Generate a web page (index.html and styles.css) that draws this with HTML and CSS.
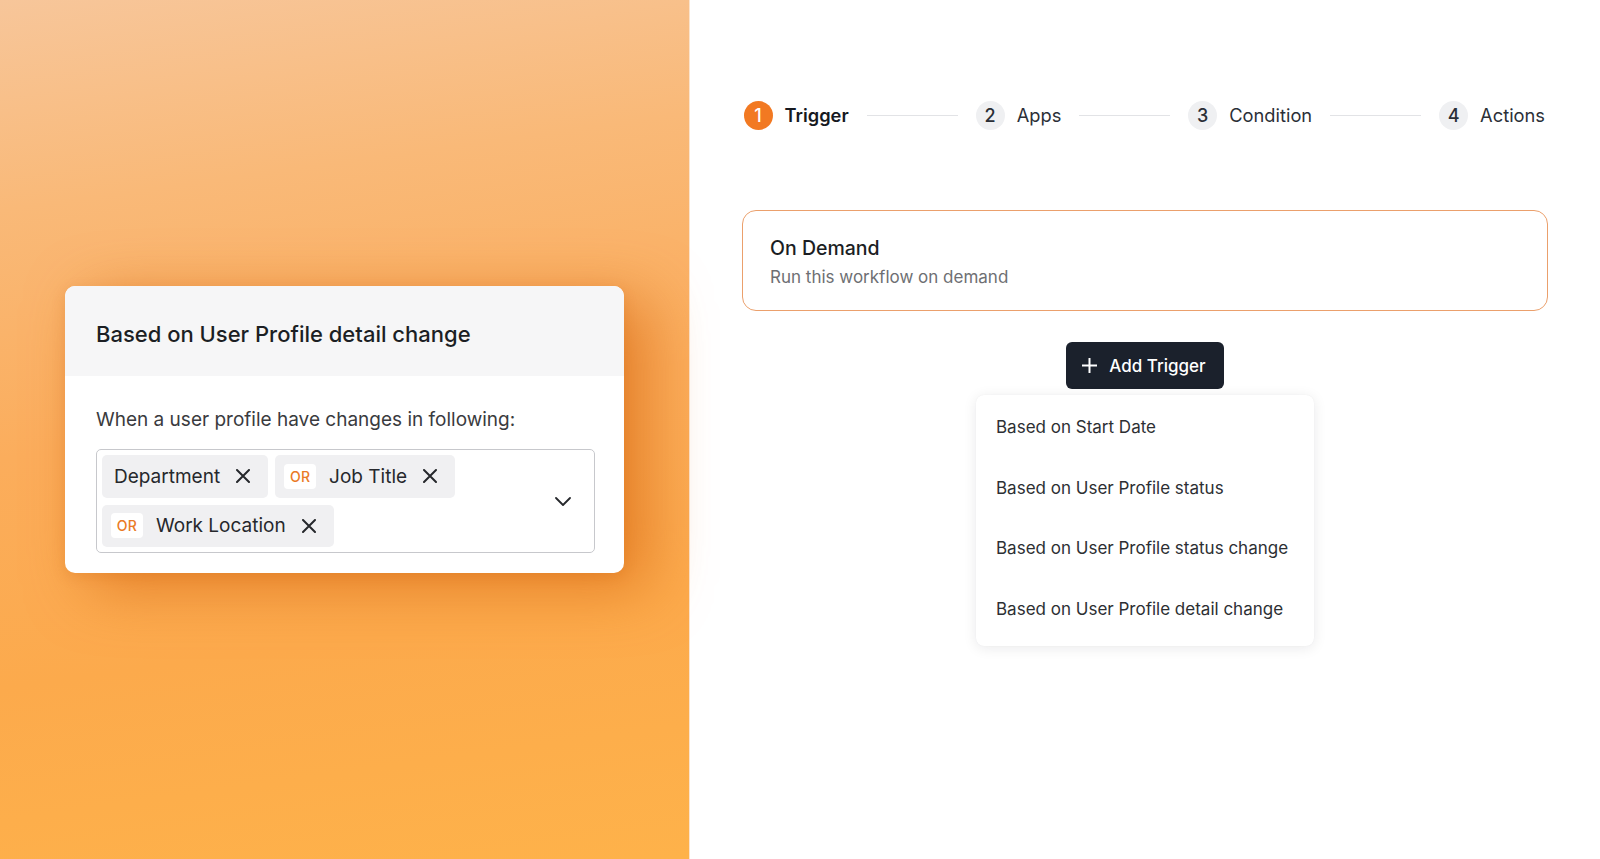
FILE: index.html
```html
<!DOCTYPE html>
<html lang="en">
<head>
<meta charset="utf-8">
<title>Workflow Trigger</title>
<link rel="stylesheet" href="styles.css">
</head>
<body>
<div class="page">
  <section class="hero">
    <div class="rule-card">
      <div class="rule-head">Based on User Profile detail change</div>
      <div class="rule-body">
        <p class="rule-label">When a user profile have changes in following:</p>
        <div class="select">
          <div class="chips">
            <span class="chip">Department
              <svg class="x" viewBox="0 0 14 14"><path d="M1 1L13 13M13 1L1 13"/></svg>
            </span>
            <span class="chip chip-or"><span class="or">OR</span>Job Title
              <svg class="x" viewBox="0 0 14 14"><path d="M1 1L13 13M13 1L1 13"/></svg>
            </span>
            <span class="chip chip-or"><span class="or">OR</span>Work Location
              <svg class="x" viewBox="0 0 14 14"><path d="M1 1L13 13M13 1L1 13"/></svg>
            </span>
          </div>
          <svg class="chev" viewBox="0 0 16 9"><path d="M1 1L8 8L15 1"/></svg>
        </div>
      </div>
    </div>
  </section>

  <main class="builder">
    <ol class="stepper">
      <li class="step step-active"><span class="num">1</span><span class="step-label">Trigger</span></li>
      <li class="line"></li>
      <li class="step"><span class="num">2</span><span class="step-label">Apps</span></li>
      <li class="line"></li>
      <li class="step"><span class="num">3</span><span class="step-label">Condition</span></li>
      <li class="line"></li>
      <li class="step"><span class="num">4</span><span class="step-label">Actions</span></li>
    </ol>

    <div class="trigger-card">
      <div class="trigger-title">On Demand</div>
      <div class="trigger-sub">Run this workflow on demand</div>
    </div>

    <div class="add-wrap">
      <button class="add-btn" type="button">
        <svg class="plus" viewBox="0 0 15 15"><path d="M7.5 0.5V14.5M0.5 7.5H14.5"/></svg>
        Add Trigger
      </button>
      <ul class="menu">
        <li>Based on Start Date</li>
        <li>Based on User Profile status</li>
        <li>Based on User Profile status change</li>
        <li>Based on User Profile detail change</li>
      </ul>
    </div>
  </main>
</div>
</body>
</html>
```

FILE: styles.css
```css
* { box-sizing: border-box; }

html, body {
  margin: 0;
  padding: 0;
  background: #ffffff;
  font-family: Inter, "Noto Sans", "Liberation Sans", sans-serif;
  color: #1f2329;
}

.page {
  display: flex;
  width: 1600px;
  height: 859px;
  overflow: hidden;
}

/* ---------- left hero ---------- */
.hero {
  width: 690px;
  flex: none;
  display: flex;
  align-items: center;
  justify-content: center;
  background: linear-gradient(172deg, #f7c69a 0%, #f9b978 22%, #fbad5c 48%, #fcaa4c 72%, #feb24a 100%);
  border-right: 1px solid #fbe3cc;
}

.rule-card {
  width: 559px;
  background: #ffffff;
  border-radius: 10px;
  overflow: hidden;
  box-shadow: 24px 14px 60px rgba(214, 100, 12, 0.6), 0 4px 14px rgba(190, 90, 10, 0.18);
}

.rule-head {
  background: #f6f6f7;
  height: 90px;
  padding: 36px 31px 0 31px;
  font-size: 22px;
  line-height: 24px;
  font-weight: 500;
  color: #1c1f24;
}

.rule-body {
  padding: 32px 29px 20px 31px;
}

.rule-label {
  margin: 0 0 17px 0;
  font-size: 19px;
  line-height: 24px;
  color: #3a3b3e;
}

.select {
  display: flex;
  align-items: center;
  border: 1px solid #c7c8cc;
  border-radius: 5px;
  padding: 5px 23px 5px 5px;
  min-height: 104px;
}

.chips {
  flex: 1;
  display: flex;
  flex-wrap: wrap;
  gap: 7px;
}

.chip {
  display: inline-flex;
  align-items: center;
  height: 42.5px;
  padding: 0 18px 0 12px;
  background: #f0f0f2;
  border-radius: 5px;
  font-size: 19px;
  color: #26282c;
  white-space: nowrap;
}

.chip-or { padding-left: 9px; }

.or {
  display: inline-flex;
  align-items: center;
  justify-content: center;
  width: 32px;
  height: 25px;
  margin-right: 13px;
  background: #ffffff;
  border-radius: 4px;
  font-size: 14px;
  font-weight: 500;
  color: #ea7a26;
  letter-spacing: 0.3px;
}

.x {
  width: 14px;
  height: 14px;
  margin-left: 16px;
  fill: none;
  stroke: #26282c;
  stroke-width: 2;
  stroke-linecap: round;
}

.chev {
  width: 16px;
  height: 9px;
  flex: none;
  fill: none;
  stroke: #26282c;
  stroke-width: 1.8;
  stroke-linecap: round;
  stroke-linejoin: round;
}

/* ---------- right builder ---------- */
.builder {
  flex: 1;
  padding: 100px 52px 0 52px;
  display: flex;
  flex-direction: column;
}

.stepper {
  list-style: none;
  margin: 0;
  padding: 0 3px 0 1.5px;
  display: flex;
  align-items: center;
  height: 30px;
}

.step {
  display: flex;
  align-items: center;
  gap: 12px;
  flex: none;
}

.num {
  width: 29px;
  height: 29px;
  border-radius: 50%;
  background: #eff0f2;
  color: #2a2e36;
  display: flex;
  align-items: center;
  justify-content: center;
  font-size: 18px;
  font-weight: 500;
}

.step-label {
  font-size: 18.3px;
  color: #2b2f37;
}

.step-active .num {
  background: #f27922;
  color: #ffffff;
}

.step-active .step-label {
  font-weight: 600;
  color: #16191f;
}

.line {
  flex: 1;
  height: 1px;
  margin: 0 18px;
  background: #e2e3e6;
}

.trigger-card {
  margin-top: 80px;
  height: 101px;
  border: 1.5px solid #eba06c;
  border-radius: 14px;
  padding: 25px 27px 0 27px;
}

.trigger-title {
  font-size: 19.5px;
  line-height: 24px;
  font-weight: 500;
  color: #1b1e23;
}

.trigger-sub {
  margin-top: 6px;
  font-size: 17px;
  line-height: 22px;
  color: #6e6f73;
}

.add-wrap {
  margin-top: 31px;
  display: flex;
  flex-direction: column;
  align-items: center;
}

.add-btn {
  display: inline-flex;
  align-items: center;
  gap: 12px;
  height: 47px;
  padding: 0 18px 0 16px;
  background: #1b212c;
  border: none;
  border-radius: 6px;
  color: #ffffff;
  font-family: inherit;
  font-size: 17px;
  font-weight: 500;
}

.plus {
  width: 15px;
  height: 15px;
  fill: none;
  stroke: #ffffff;
  stroke-width: 2;
  stroke-linecap: round;
}

.menu {
  list-style: none;
  margin: 6px 0 0 0;
  padding: 2px 0 7px 0;
  width: 338px;
  background: #ffffff;
  border-radius: 8px;
  box-shadow: 0 2px 14px rgba(20, 24, 32, 0.09), 0 0 1px rgba(20, 24, 32, 0.08);
}

.menu li {
  height: 60.5px;
  display: flex;
  align-items: center;
  padding: 0 20px;
  font-size: 17px;
  color: #2d2f33;
  white-space: nowrap;
}
```
